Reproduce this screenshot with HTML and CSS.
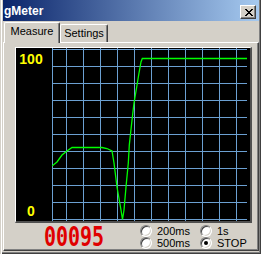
FILE: index.html
```html
<!DOCTYPE html>
<html lang="en">
<head>
  <meta charset="UTF-8" />
  <title>gMeter</title>
  <link rel="stylesheet" href="styles.css">
</head>
<body>
  <div class="window">
    <div class="titlebar">
      <span class="title">gMeter</span>
      <div class="close">
        <svg width="8" height="7" viewBox="0 0 8 7">
          <path d="M0 0h2v1h-2z M6 0h2v1h-2z M1 1h2v1h-2z M5 1h2v1h-2z M2 2h4v1h-4z M3 3h2v1h-2z M2 4h4v1h-4z M1 5h2v1h-2z M5 5h2v1h-2z M0 6h2v1h-2z M6 6h2v1h-2z" fill="#000"/>
        </svg>
      </div>
    </div>

    <div class="tabs">
      <div class="tab active">Measure</div>
      <div class="tab">Settings</div>
    </div>

    <div class="panel">
      <div class="chart">
        <div class="scale">
          <span>100</span>
          <span>0</span>
        </div>
        <svg class="grid" width="195" height="173" viewBox="0 0 195 173">
          <path class="lines" d="M0.5 0V173 M14.5 0V173 M31.5 0V173 M48.5 0V173 M65.5 0V173 M82.5 0V173 M99.5 0V173 M116.5 0V173 M133.5 0V173 M150.5 0V173 M167.5 0V173 M184.5 0V173
            M0 1.5H195 M0 18.5H195 M0 35.5H195 M0 52.5H195 M0 69.5H195 M0 86.5H195 M0 103.5H195 M0 120.5H195 M0 137.5H195 M0 154.5H195 M0 171.5H195"/>
          <polyline class="trace" points="0,118 5,114 10,107 15,103 20,99.5 50,99.5 55,100.5 60,103 62,115 65,139 69,162 70.5,171.5 72,162 74,139 76.3,115 77.3,97 79.7,75 82,55 84.7,39 87,25 89,14 90.3,10.5 195,10.5"/>
        </svg>
      </div>

      <div class="controls">
        <div class="lcd"><span>00095</span></div>
        <div class="rates">
          <div class="radio"><span class="dot"></span>200ms</div>
          <div class="radio"><span class="dot"></span>1s</div>
          <div class="radio"><span class="dot"></span>500ms</div>
          <div class="radio checked"><span class="dot"></span>STOP</div>
        </div>
      </div>
    </div>
  </div>
</body>
</html>
```

FILE: styles.css
```css
html, body {
  margin: 0;
  padding: 0;
  background-color: #D4D0C8;
  font-family: 'Liberation Sans', Arial, sans-serif;
  font-size: 11px;
  color: #000;
}

.window {
  width: 261px;
  height: 254px;
  box-sizing: border-box;
  padding: 0 2px 2px 3px;
  background-color: #D4D0C8;
  box-shadow:
    inset 1px 0 #D4D0C8,
    inset 2px 0 #FFFFFF,
    inset -1px -1px #404040,
    inset -2px -2px #808080;
}

/* title bar */
.titlebar {
  height: 21px;
  display: flex;
  justify-content: space-between;
  align-items: flex-start;
  background: linear-gradient(to right, #0A246A, #A6CAF0);
}

.title {
  padding: 4px 0 0 1px;
  font-size: 12px;
  line-height: 14px;
  font-weight: 700;
  color: #FFFFFF;
}

.close {
  width: 16px;
  height: 14px;
  margin: 5px 3px 0 0;
  box-sizing: border-box;
  display: flex;
  align-items: center;
  justify-content: center;
  padding-left: 1px;
  background-color: #D4D0C8;
  border: 1px solid;
  border-color: #FFFFFF #404040 #404040 #FFFFFF;
  box-shadow: inset -1px -1px #808080;
}

/* tabs */
.tabs {
  height: 21px;
  display: flex;
  align-items: flex-end;
  padding-left: 1px;
}

.tab {
  width: 48px;
  height: 18px;
  box-sizing: border-box;
  padding-top: 2px;
  text-align: center;
  line-height: 13px;
  border-top: 1px solid #FFFFFF;
  border-left: 1px solid #FFFFFF;
  border-right: 1px solid #404040;
  border-radius: 2px 2px 0 0;
  box-shadow: inset -1px 0 #808080;
}

.tab.active {
  width: 56px;
  height: 21px;
  margin-bottom: -1px;
  position: relative;
  background-color: #D4D0C8;
}

/* tab page */
.panel {
  height: 209px;
  box-sizing: border-box;
  padding: 4px 0 0 11px;
  border: 1px solid;
  border-color: #FFFFFF #404040 #404040 #FFFFFF;
  box-shadow: inset -1px -1px #808080;
}

.chart {
  width: 234px;
  display: flex;
  background-color: #000;
  border-top: 1px solid #FFFFFF;
  border-left: 1px solid #FFFFFF;
  border-right: 2px solid #505050;
  border-bottom: 2px solid #505050;
}

.scale {
  width: 36px;
  box-sizing: border-box;
  padding: 3px 6px 2px 0;
  display: flex;
  flex-direction: column;
  justify-content: space-between;
  align-items: center;
  color: #FFFF00;
  font-size: 14px;
  line-height: 16px;
  font-weight: 700;
}

.grid {
  display: block;
}

.grid .lines {
  stroke: #6CA0D2;
  stroke-width: 1;
  fill: none;
}

.grid .trace {
  stroke: #00FF00;
  stroke-width: 1.3;
  fill: none;
}

/* bottom row */
.controls {
  display: flex;
  padding-top: 2px;
}

.lcd {
  width: 96px;
  margin: 2px 0 0 29px;
  white-space: nowrap;
}

.lcd span {
  display: inline-block;
  font-family: 'DejaVu Sans Mono', monospace;
  font-size: 27px;
  line-height: 20px;
  font-weight: 700;
  color: #E00000;
  transform: scaleX(0.74);
  transform-origin: left;
}

.rates {
  display: grid;
  grid-template-columns: 60px auto;
  grid-auto-rows: 12px;
}

.radio {
  display: flex;
  align-items: center;
  gap: 5px;
  line-height: 12px;
}

.dot {
  width: 12px;
  height: 12px;
  box-sizing: border-box;
  display: flex;
  align-items: center;
  justify-content: center;
  border-radius: 50%;
  background-color: #FFFFFF;
  border: 1px solid;
  border-color: #808080 #FFFFFF #FFFFFF #808080;
  box-shadow: inset 1px 1px #404040, inset -1px -1px #D4D0C8;
}

.radio.checked .dot::after {
  content: "";
  width: 4px;
  height: 4px;
  border-radius: 50%;
  background-color: #000;
}
```
